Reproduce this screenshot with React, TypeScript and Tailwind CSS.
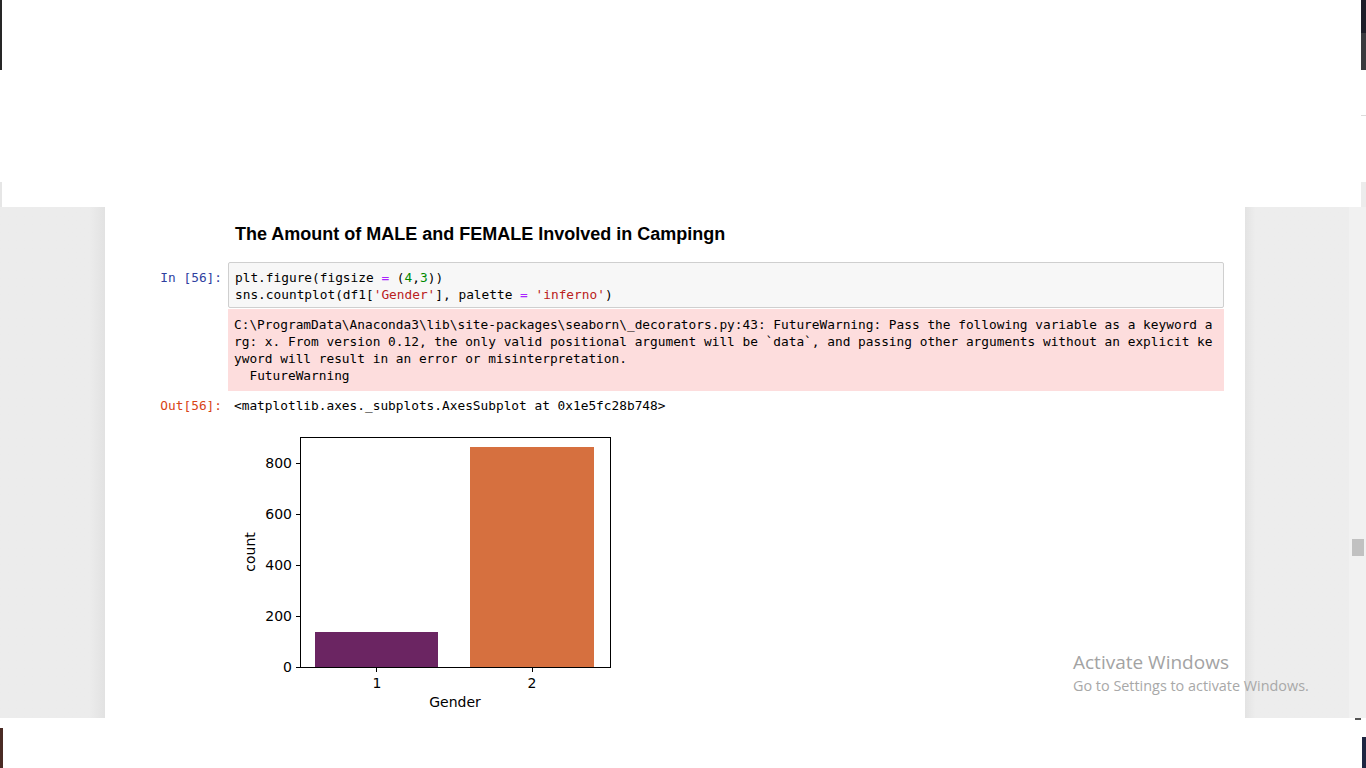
import React from "react";

const mono = { fontFamily: '"DejaVu Sans Mono", "Liberation Mono", monospace' };

function CountPlot() {
  const yTicks = [
    { v: "0", y: 242 },
    { v: "200", y: 191 },
    { v: "400", y: 140 },
    { v: "600", y: 89 },
    { v: "800", y: 38 },
  ];
  return (
    <svg
      width="400"
      height="290"
      viewBox="0 0 400 290"
      style={{ fontFamily: '"DejaVu Sans", sans-serif' }}
    >
      {/* bars */}
      <rect x="87" y="207" width="123" height="35" fill="#6b2562" />
      <rect x="242" y="22" width="124" height="220" fill="#d6703f" />
      {/* axes frame */}
      <rect x="72.5" y="12.5" width="310" height="230" fill="none" stroke="#000" strokeWidth="1" />
      {yTicks.map((t) => (
        <g key={t.v}>
          <line x1="68" y1={t.y + 0.5} x2="72" y2={t.y + 0.5} stroke="#000" />
          <text x="64" y={t.y + 5} fontSize="14" textAnchor="end" fill="#000">
            {t.v}
          </text>
        </g>
      ))}
      <line x1="148.5" y1="243" x2="148.5" y2="247" stroke="#000" />
      <line x1="304.5" y1="243" x2="304.5" y2="247" stroke="#000" />
      <text x="149" y="263" fontSize="14" textAnchor="middle" fill="#000">1</text>
      <text x="304" y="263" fontSize="14" textAnchor="middle" fill="#000">2</text>
      <text x="227" y="282" fontSize="14" textAnchor="middle" fill="#000">Gender</text>
      <text
        transform="translate(27,127) rotate(-90)"
        fontSize="14"
        textAnchor="middle"
        fill="#000"
      >
        count
      </text>
    </svg>
  );
}

function Prompt({ label, out }: { label: string; out?: boolean }) {
  return (
    <div
      className={`w-[123px] shrink-0 pr-[6px] text-right text-[12.8px] leading-[17px] ${
        out ? "text-[#d84315]" : "text-[#303f9f]"
      }`}
      style={mono}
    >
      {label}
    </div>
  );
}

export default function App() {
  return (
    <div className="relative flex h-[768px] w-[1366px] flex-col overflow-hidden bg-white">
      {/* top band */}
      <div className="flex h-[207px] justify-between">
        <div className="flex w-[2px] flex-col">
          <div className="h-[70px] bg-[#262626]" />
          <div className="mt-[112px] h-[25px] bg-[#e6e6e6]" />
        </div>
        <div className="flex w-[5px] flex-col">
          <div className="h-[33px] bg-[#1d1d28]" />
          <div className="h-[37px] bg-[#3a3a3e]" />
          <div className="mt-[45px] h-px bg-[#dcdcdc]" />
          <div className="mt-[66px] h-[25px] bg-[#ececec]" />
        </div>
      </div>

      {/* page area */}
      <div className="flex h-[511px] bg-[#ededed]">
        <div className="w-[105px] shrink-0 bg-gradient-to-r from-[#ececec] from-85% to-[#e2e2e2]" />
        <div className="w-[1140px] shrink-0 bg-white pt-[16px] pr-[21px]">
          {/* heading */}
          <div className="flex">
            <div className="w-[123px] shrink-0" />
            <h3
              className="pl-[7px] text-[18px] font-bold leading-[22px] text-black"
              style={{ fontFamily: '"Liberation Sans", Arial, sans-serif' }}
            >
              The Amount of MALE and FEMALE Involved in Campingn
            </h3>
          </div>

          {/* input cell */}
          <div className="mt-[17px] flex">
            <div className="pt-[7px]">
              <Prompt label="In [56]:" />
            </div>
            <div className="flex-1">
              <div
                className="rounded-[2px] border border-[#cfcfcf] bg-[#f7f7f7] px-[6px] pt-[6px] pb-[4px] text-[12.8px] leading-[17px] text-black"
                style={mono}
              >
                <div>
                  plt.figure(figsize <span className="text-[#aa22ff]">=</span> (
                  <span className="text-[#008800]">4</span>,<span className="text-[#008800]">3</span>))
                </div>
                <div>
                  sns.countplot(df1[<span className="text-[#ba2121]">'Gender'</span>], palette{" "}
                  <span className="text-[#aa22ff]">=</span>{" "}
                  <span className="text-[#ba2121]">'inferno'</span>)
                </div>
              </div>

              {/* stderr */}
              <div
                className="mt-[1px] bg-[#fddddd] px-[6px] py-[7px] text-[12.8px] leading-[17px] break-all whitespace-pre-wrap text-black"
                style={mono}
              >
                {"C:\\ProgramData\\Anaconda3\\lib\\site-packages\\seaborn\\_decorators.py:43: FutureWarning: Pass the following variable as a keyword arg: x. From version 0.12, the only valid positional argument will be `data`, and passing other arguments without an explicit keyword will result in an error or misinterpretation.\n  FutureWarning"}
              </div>
            </div>
          </div>

          {/* output */}
          <div className="mt-[6px] flex">
            <Prompt label="Out[56]:" out />
            <div className="flex-1 pl-[6px] text-[12.8px] leading-[17px] text-black" style={mono}>
              {"<matplotlib.axes._subplots.AxesSubplot at 0x1e5fc28b748>"}
            </div>
          </div>

          <div className="mt-[11px] flex">
            <div className="w-[123px] shrink-0" />
            <CountPlot />
          </div>
        </div>
        <div className="flex-1 bg-gradient-to-r from-[#e3e3e3] to-[#ededed] to-[10%]" />
        <div className="relative w-[17px] shrink-0 bg-[#f1f1f1]">
          <div className="absolute top-[332px] left-[3px] h-[17px] w-[12px] bg-[#c1c1c1]" />
        </div>
      </div>

      {/* bottom band */}
      <div className="flex h-[50px] justify-between">
        <div className="mt-[10px] w-[3px] bg-[#4a2b24]" />
        <div className="flex">
          <div className="mr-[1px] h-[2px] w-[6px] bg-[#555]" />
          <div className="mt-[19px] w-[4px] bg-[#1e2541]" />
        </div>
      </div>

      {/* activation watermark */}
      <div
        className="pointer-events-none absolute top-[649px] left-[1073px] text-[#a3a3a3]"
        style={{ fontFamily: '"Open Sans", "Noto Sans", sans-serif' }}
      >
        <div className="text-[19px] leading-[26px]">Activate Windows</div>
        <div className="text-[14.4px] leading-[21px] text-[#a8a8a8]">
          Go to Settings to activate Windows.
        </div>
      </div>
    </div>
  );
}
